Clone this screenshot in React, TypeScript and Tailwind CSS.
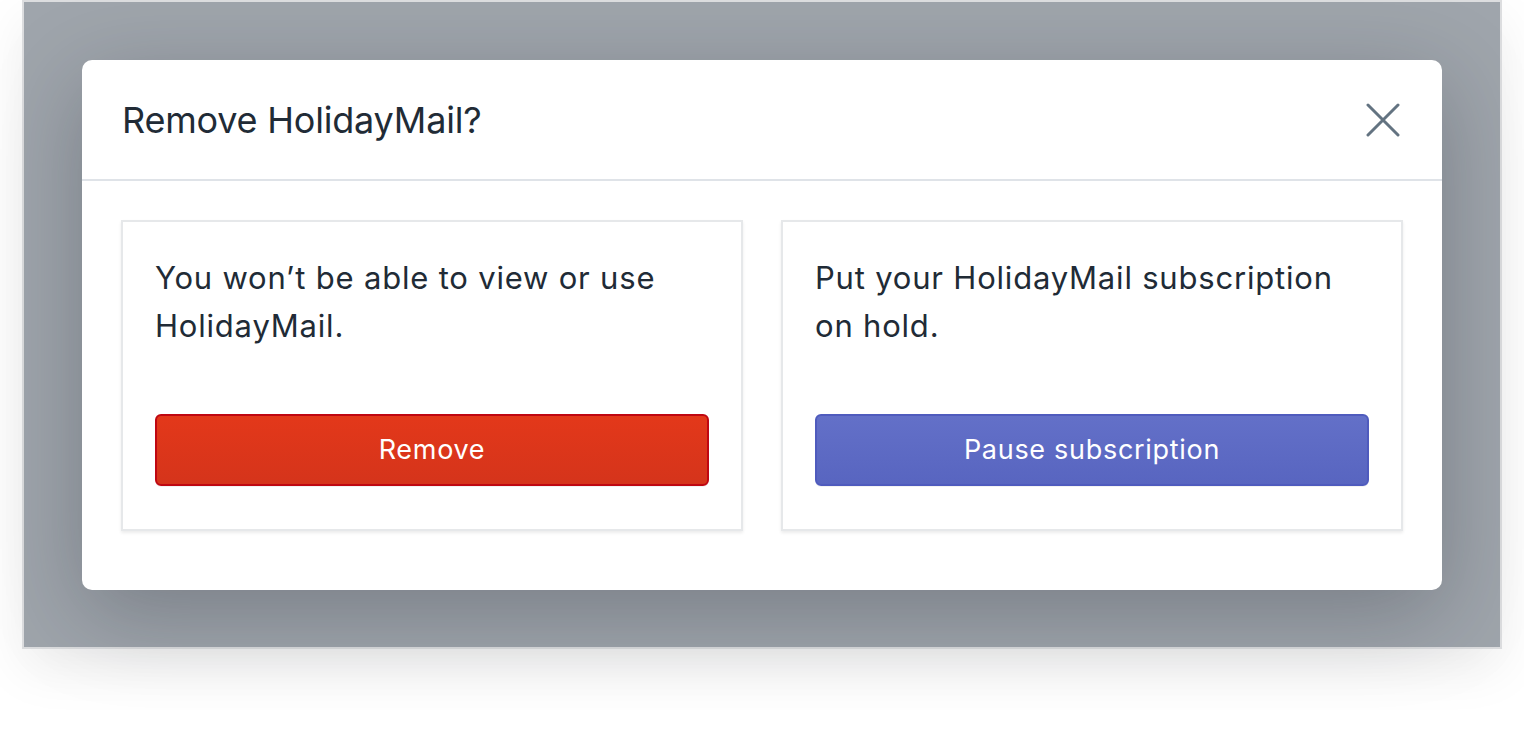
import React from 'react';

const font = { fontFamily: 'Inter, "Noto Sans", sans-serif' };

export default function App() {
  return (
    <div className="w-[1524px] h-[734px] bg-white overflow-hidden" style={font}>
      {/* Frame */}
      <div className="ml-[22px] w-[1480px] h-[649px] border-2 border-[#dcdddf] bg-[#9fa5ac] shadow-[0_20px_50px_rgba(0,0,0,0.07)] pt-[58px] pl-[58px]">
        {/* Modal */}
        <div className="w-[1360px] h-[530px] bg-white rounded-[10px] shadow-[0_24px_90px_rgba(20,25,35,0.28)] flex flex-col">
          <div className="h-[121px] flex items-center justify-between pl-[40px] pr-[42px] border-b-2 border-[#dfe3e8] shrink-0">
            <h1 className="text-[36px] text-[#212b36] tracking-[-0.2px] font-normal">Remove HolidayMail?</h1>
            <svg width="34" height="34" viewBox="0 0 34 34" className="text-[#637381]">
              <path d="M2 2L32 32M32 2L2 32" stroke="currentColor" strokeWidth="3" strokeLinecap="round" />
            </svg>
          </div>
          <div className="flex gap-[38px] px-[39px] pt-[39px]">
            <div className="w-[622px] h-[311px] border-2 border-[#e6e8ea] shadow-[0_2px_3px_rgba(0,0,0,0.08)] pt-[32px] px-[32px] flex flex-col">
              <p className="text-[31px] leading-[48px] text-[#212b36] tracking-[0.8px]">You won’t be able to view or use HolidayMail.</p>
              <button className="mt-auto mb-[43px] h-[72px] w-full rounded-[6px] border-2 border-[#bf0711] bg-gradient-to-b from-[#e3381a] to-[#d5341b] text-white text-[27px] tracking-[0.7px] shadow-[0_1px_0_rgba(0,0,0,0.05)]">
                Remove
              </button>
            </div>
            <div className="w-[622px] h-[311px] border-2 border-[#e6e8ea] shadow-[0_2px_3px_rgba(0,0,0,0.08)] pt-[32px] px-[32px] flex flex-col">
              <p className="text-[31px] leading-[48px] text-[#212b36] tracking-[0.8px]">Put your HolidayMail subscription on hold.</p>
              <button className="mt-auto mb-[43px] h-[72px] w-full rounded-[6px] border-2 border-[#4f5bbd] bg-gradient-to-b from-[#6370c8] to-[#5865c0] text-white text-[27px] tracking-[0.7px] shadow-[0_1px_0_rgba(0,0,0,0.05)]">
                Pause subscription
              </button>
            </div>
          </div>
        </div>
      </div>
    </div>
  );
}
